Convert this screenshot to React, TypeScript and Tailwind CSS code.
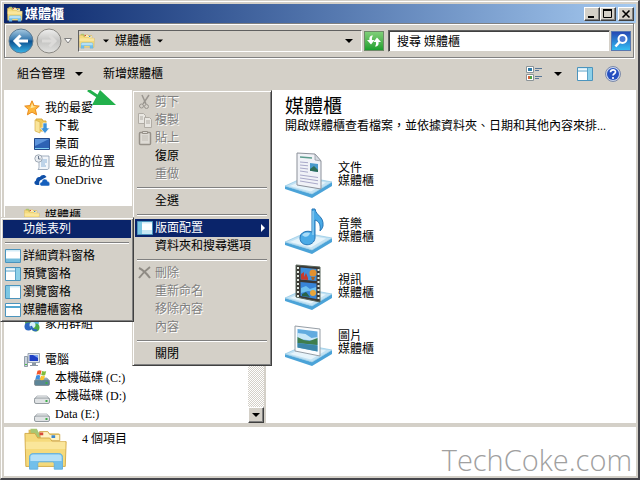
import React, { useState } from "react";
import { twMerge } from "tailwind-merge";

type IconProps = { className?: string };

const FolderIcon = ({ className = "size-4" }: IconProps) => (
  <svg viewBox="0 0 48 48" className={className} aria-hidden="true">
    <path d="M5 3h9l2 4h22v8H5z" fill="#d9bb58" />
    <path d="M7 2h7l2 4h10v5H8z" fill="#a9c774" />
    <path d="M17 5h9l2 3h11v7H18z" fill="#fff3c4" stroke="#cfa94a" />
    <path d="M1 7h11l3 5h13l3 4h15l-1 27H2z" fill="#f5da7c" stroke="#d2a945" />
    <path d="M2 16h43v8H2z" fill="#fbe9a2" opacity=".8" />
    <path d="M17 6h4v3h-4z" fill="#d84a3a" />
    <path d="M30 9h4v3h-4z" fill="#3a86d0" />
    <path d="M6 46V33c0-3 2-4 4-4h28c3 0 4 2 4 4v13h-9v-6c0-1-1-2-2-2H17c-1 0-2 1-2 2v6z" fill="#72bfea" stroke="#62afdf" />
    <path d="M7 37v-4c0-2 1-3 3-3h28c2 0 3 1 3 3v4z" fill="#b4e0f8" />
  </svg>
);

const StarIcon = () => (
  <svg viewBox="0 0 16 16" className="size-4" aria-hidden="true">
    <path d="M8 .8l2.100 4.800 5.200.5-3.900 3.500 1.200 5.200L8 12.100l-4.600 2.700 1.200-5.200L.7 6.100l5.200-.5z" fill="#fdb73c" stroke="#e98a1c" />
    <path d="M8 3l1.300 3.300 3 .4-6 1.600L7 6.400z" fill="#ffe9a3" />
  </svg>
);

const DownloadIcon = () => (
  <svg viewBox="0 0 16 16" className="size-4" aria-hidden="true">
    <path d="M2 1h6l1 2h3v10H2z" fill="#efc95a" stroke="#d8a93a" />
    <path d="M1 2l5 2v11l-5-2z" fill="#fae59a" stroke="#d8b04a" strokeWidth=".7" />
    <path d="M9 5h4v5h2.500L11 15.500 6.500 10H9z" fill="#3d93da" stroke="#fff" strokeWidth=".6" />
  </svg>
);

const DesktopIcon = () => (
  <svg viewBox="0 0 16 16" className="size-4" aria-hidden="true">
    <path d="M.5 2.500h15v11H.5z" fill="#2d62b4" stroke="#23498a" />
    <path d="M1 3h14L1 10z" fill="#5e95dc" />
    <path d="M1 12h14v1H1z" fill="#7fd0f2" />
  </svg>
);

const RecentIcon = () => (
  <svg viewBox="0 0 16 16" className="size-4" aria-hidden="true">
    <path d="M5 2h10v11c0 2-1 2.500-2 2.500H4c1-1 1-2 1-3z" fill="#f3f6fa" stroke="#8b9cb0" strokeWidth=".8" />
    <path d="M7 6h6M7 8h6M7 10h4M7 12h5" stroke="#7fa9d4" strokeWidth=".9" />
    <circle cx="4.500" cy="4.500" r="3.700" fill="#e9edf2" stroke="#97a2ae" strokeWidth=".9" />
    <path d="M4.500 2v3h2" stroke="#5b6b80" fill="none" strokeWidth=".9" />
  </svg>
);

const OneDriveIcon = () => (
  <svg viewBox="0 0 16 16" className="size-4" aria-hidden="true">
    <path d="M3 13C0 13-.5 9.500 2 8.500 2 6 4 4.500 6 5c1-2.500 5-3 6.500 0L7 8c-2 1-2 3-1.500 5z" fill="#0f4fa8" />
    <path d="M7.500 14c-2.500-.5-2-3.800.3-4 0-3.600 5-4 5.700-.7C16.500 9.500 16.500 14 14 14z" fill="#1560bd" stroke="#fff" strokeWidth=".5" />
  </svg>
);

const HomeGroupIcon = () => (
  <svg viewBox="0 0 16 16" className="size-4" aria-hidden="true">
    <circle cx="5" cy="6" r="4" fill="#56a84c" />
    <circle cx="11" cy="6" r="4" fill="#58b4e4" />
    <circle cx="4.500" cy="10.500" r="4" fill="#2d67c2" />
    <circle cx="11.500" cy="11.500" r="4" fill="#4cab48" />
    <circle cx="8.500" cy="9" r="3" fill="#d8f0fb" />
    <path d="M7 10c1 3 3 5 6 4" fill="none" stroke="#2d67c2" strokeWidth="2" />
  </svg>
);

const ComputerIcon = () => (
  <svg viewBox="0 0 16 16" className="size-4" aria-hidden="true">
    <path d="M.5 4.500h3v10h-3z" fill="#c9d3dd" stroke="#7f8c99" strokeWidth=".8" />
    <path d="M4 1.500h11.500v9H4z" fill="#dfe5ec" stroke="#8492a2" strokeWidth=".8" />
    <path d="M5.500 3h8.500v6H5.500z" fill="#1e3fc4" />
    <path d="M9 3h5v3z" fill="#7ea6f2" />
    <path d="M8 11h4v2h2v1H6v-1h2z" fill="#8d99a6" />
    <path d="M1 12h2v1H1z" fill="#4ec04a" />
  </svg>
);

const DiskIcon = ({ system = false }: { system?: boolean }) => (
  <svg viewBox="0 0 16 16" className="size-4" aria-hidden="true">
    <path d="M3 8h10l2.500 3H.5z" fill={system ? "#8fb6cc" : "#f4f5f6"} stroke="#98a0a6" strokeWidth=".7" />
    <rect x=".5" y="10" width="15" height="5.500" rx="1.500" fill={system ? "#5d8597" : "#dfe2e4"} stroke="#7c858b" strokeWidth=".8" />
    <path d="M11.500 12h2v2h-2z" fill="#3fae49" />
    {system && (
      <g>
        <path d="M3.500.8q2-1 4 0l-1 4q-2-1-4 0z" fill="#f0562c" />
        <path d="M8.200 1.100q2 1 4-.2l-1 4q-2 1-4 .2z" fill="#7fbd3b" />
        <path d="M2.300 5.500q2-1 4 0l-1 4q-2-1-4 0z" fill="#3c8fe0" />
        <path d="M7 5.800q2 1 4-.2l-1 4q-2 1-4 .2z" fill="#fbc52e" />
      </g>
    )}
  </svg>
);

type Pane = "bottom" | "right" | "left" | "top" | "both";

// Маленькая иконка окна с выделенной панелью
const PaneIcon = ({ pane }: { pane: Pane }) => (
  <svg viewBox="0 0 16 16" className="size-4 shrink-0" aria-hidden="true">
    <path d="M.5 1.500h15v13H.5z" fill="#fff" stroke="#4b94bd" />
    {pane !== "top" && <path d="M1 2h14v1.500H1z" fill="#d3ebf6" />}
    {pane === "bottom" && <path d="M1 10.500h14V14H1z" fill="#74bcdc" />}
    {pane === "top" && <path d="M1 4h14v2H1z" fill="#54a8d2" />}
    {pane === "right" && (
      <>
        <path d="M10.500 2H15v12h-4.500z" fill="#8dd0e8" />
        <path d="M1 5h9M10.500 2v12" stroke="#5ba3c8" />
      </>
    )}
    {(pane === "left" || pane === "both") && <path d="M1 2h4v12H1z" fill="#7cc6e2" />}
    {pane === "both" && <path d="M5 10h10v4H5z" fill="#c8e8f4" />}
  </svg>
);

const CutIcon = () => (
  <svg viewBox="0 0 16 16" className="size-4" fill="none" stroke="#9a9690" aria-hidden="true">
    <path d="M5 1l4 9M12 1L6 10" strokeWidth="1.500" />
    <circle cx="4.500" cy="12" r="2" />
    <circle cx="9.500" cy="12.500" r="2" />
  </svg>
);

const CopyIcon = () => (
  <svg viewBox="0 0 16 16" className="size-4" fill="#e9e7e2" stroke="#b0aca5" aria-hidden="true">
    <path d="M1.500 1.500h5l2 2v8h-7z" />
    <path d="M7.500 5.500h5l2 2v8h-7z" />
    <path d="M3 5h3M3 7h3M9 9h4M9 11h4" />
  </svg>
);

const PasteIcon = () => (
  <svg viewBox="0 0 16 16" className="size-4" fill="#dedbd5" stroke="#969189" aria-hidden="true">
    <rect x="2.500" y="2.500" width="11" height="12" rx="1" strokeWidth="1.500" />
    <path d="M5.500 1.500h5v2h-5z" />
    <path d="M5 6h6M5 8h6M5 10h6" stroke="#c2beb6" />
  </svg>
);

const DeleteIcon = () => (
  <svg viewBox="0 0 16 16" className="size-4" fill="none" aria-hidden="true">
    <path d="M2 3c4 2 8 6 11 10M13 2C9 5 5 9 2 13" stroke="#8f8b84" strokeWidth="2" />
  </svg>
);

const Caret = ({ className = "" }: IconProps) => (
  <svg viewBox="0 0 8 4" className={twMerge("h-1 w-2 shrink-0", className)} aria-hidden="true">
    <path d="M0 0h8L4 4z" fill="currentColor" />
  </svg>
);

// Голубая подставка под иконкой библиотеки
const Stand = () => (
  <g>
    <path d="M0 35l27 8 20-12v4L27 47 0 38z" fill="#4ba3d8" />
    <path d="M0 35l20-9 27 5-20 12z" fill="#c3e2f3" stroke="#8cc5e4" strokeWidth=".7" />
    <path d="M5 35l16-7 20 3.500-15 9z" fill="#e6f4fb" />
  </g>
);

const DocumentArt = () => (
  <svg viewBox="0 0 48 48" className="size-12" aria-hidden="true">
    <Stand />
    <path d="M12 2l18 1 6 7v28l-24-4z" fill="#f0f2f7" stroke="#8b9099" />
    <path d="M30 3v6l6 1z" fill="#d5dae2" stroke="#8b9099" strokeWidth=".7" />
    <path d="M15 6l12 1" stroke="#5b9c8d" strokeWidth="1.500" />
    <path d="M15 11l8 .7M15 14l8 .8M15 17l8 1M15 20l8 1.200M15 24l18 2.500M15 27l18 2.700M15 30l18 3" stroke="#a9a9c9" />
    <path d="M25 12l8 1v8l-8-1.200z" fill="#4a9acb" />
    <path d="M25 18l4-3 4 4v2l-8-1.200z" fill="#2e6d56" />
  </svg>
);

const MusicArt = () => (
  <svg viewBox="0 0 48 48" className="size-12" aria-hidden="true">
    <Stand />
    <path d="M27 2h3c1 7 9 7 8 17-1 3-2 4-3 5 1-8-2-10-5-11v18c-1 9-15 9-15 0 0-6 7-8 12-6z" fill="#4aaae6" stroke="#2474b5" />
    <path d="M17 28c2-3 6-3 8-2-1 4-5 5-8 2z" fill="#a8dcf8" />
    <path d="M28 4v24" stroke="#a8dcf8" />
  </svg>
);

const VideoArt = () => (
  <svg viewBox="0 0 48 48" className="size-12" aria-hidden="true">
    <Stand />
    <path d="M11 2l24 2v35l-24-5z" fill="#3a3733" stroke="#59665c" />
    <path d="M13 4v30M33.500 6v31" stroke="#e5eee6" strokeWidth="2" strokeDasharray="2 2" />
    <path d="M15.500 4.500l16 1.500v12l-16-1.500z" fill="#3f8fdc" />
    <path d="M15.500 19l16 1.500V36l-16-3z" fill="#3885d8" />
    <path d="M16 11l3-2v5l2-4 2 5v2l-7-.6z" fill="#c43a2d" />
    <circle cx="28" cy="10" r="3.500" fill="#e3912f" />
    <path d="M26 14h4l-1 3h-2z" fill="#a9611f" />
    <path d="M16 25l5-2 4 3 6-2v5l-8-1-7 2z" fill="#6fc1ef" />
    <circle cx="28" cy="30" r="3" fill="#e8a53a" />
    <path d="M17 31l4-2 4 5-8-1z" fill="#286348" />
  </svg>
);

const PictureArt = () => (
  <svg viewBox="0 0 48 48" className="size-12" aria-hidden="true">
    <Stand />
    <path d="M10 7l25 3v27l-25-5z" fill="#fbfcfd" stroke="#969ea6" />
    <path d="M12.500 10l20 2.500v20l-20-4z" fill="#62abdf" />
    <path d="M12.500 14l8 1 6 4 6-1v4l-20-2z" fill="#c8e7f8" />
    <path d="M12.500 18l6 3 6 1 8-3v7l-20-2z" fill="#3f7d4c" />
    <path d="M12.500 24l20 2.500v6l-20-4z" fill="#3c86a9" />
  </svg>
);

const TREE = [
  {
    label: "我的最愛",
    icon: <StarIcon />,
    items: [
      { label: "下載", icon: <DownloadIcon /> },
      { label: "桌面", icon: <DesktopIcon /> },
      { label: "最近的位置", icon: <RecentIcon /> },
      { label: "OneDrive", icon: <OneDriveIcon /> },
    ],
  },
  { label: "媒體櫃", icon: <FolderIcon />, selected: true, className: "pb-[72px]", items: [] },
  { label: "家用群組", icon: <HomeGroupIcon />, items: [] },
  {
    label: "電腦",
    icon: <ComputerIcon />,
    items: [
      { label: "本機磁碟 (C:)", icon: <DiskIcon system /> },
      { label: "本機磁碟 (D:)", icon: <DiskIcon /> },
      { label: "Data (E:)", icon: <DiskIcon /> },
    ],
  },
];

const LIBRARIES = [
  { label: "文件", art: <DocumentArt /> },
  { label: "音樂", art: <MusicArt /> },
  { label: "視訊", art: <VideoArt /> },
  { label: "圖片", art: <PictureArt /> },
];

interface MenuEntry {
  label: string;
  icon?: React.ReactNode;
  disabled?: boolean;
  active?: boolean;
  submenu?: boolean;
}

// null — разделитель
const ORGANIZE_MENU: (MenuEntry | null)[] = [
  { label: "剪下", icon: <CutIcon />, disabled: true },
  { label: "複製", icon: <CopyIcon />, disabled: true },
  { label: "貼上", icon: <PasteIcon />, disabled: true },
  { label: "復原" },
  { label: "重做", disabled: true },
  null,
  { label: "全選" },
  null,
  { label: "版面配置", icon: <PaneIcon pane="both" />, active: true, submenu: true },
  { label: "資料夾和搜尋選項" },
  null,
  { label: "刪除", icon: <DeleteIcon />, disabled: true },
  { label: "重新命名", disabled: true },
  { label: "移除內容", disabled: true },
  { label: "內容", disabled: true },
  null,
  { label: "關閉" },
];

const LAYOUT_MENU: (MenuEntry | null)[] = [
  { label: "功能表列", active: true },
  null,
  { label: "詳細資料窗格", icon: <PaneIcon pane="bottom" /> },
  { label: "預覽窗格", icon: <PaneIcon pane="right" /> },
  { label: "瀏覽窗格", icon: <PaneIcon pane="left" /> },
  { label: "媒體櫃窗格", icon: <PaneIcon pane="top" /> },
];

const Menu = ({ entries, className }: { entries: (MenuEntry | null)[]; className: string }) => (
  <div
    role="menu"
    className={twMerge(
      "absolute border border-t-[#d4d0c8] border-r-[#404040] border-b-[#404040] border-l-[#d4d0c8] bg-[#d4d0c8] p-0.5 shadow-[inset_1px_1px_0_#fff,inset_-1px_-1px_0_#808080]",
      className,
    )}
  >
    {entries.map((entry, i) =>
      entry ? (
        <button
          key={entry.label}
          type="button"
          role="menuitem"
          disabled={entry.disabled}
          className={twMerge(
            "flex h-[18px] w-full items-center gap-0.5 pl-0.5 text-left",
            entry.disabled && "text-[#808080] [text-shadow:1px_1px_0_#fff]",
            entry.active && "bg-[#0a246a] text-white",
          )}
        >
          <span className="size-4 shrink-0">{entry.icon}</span>
          <span className="grow whitespace-nowrap">{entry.label}</span>
          {entry.submenu && (
            <svg viewBox="0 0 4 8" className="mr-1 h-2 w-1" aria-hidden="true">
              <path d="M0 0l4 4-4 4z" fill="#fff" />
            </svg>
          )}
        </button>
      ) : (
        <div key={i} role="separator" className="mx-0.5 flex h-[9px] flex-col justify-center">
          <div className="border-t border-b border-t-[#808080] border-b-white" />
        </div>
      ),
    )}
  </div>
);

const WindowButton = ({ label, children }: { label: string; children: React.ReactNode }) => (
  <button
    type="button"
    aria-label={label}
    className="h-3.5 w-4 border border-t-white border-r-[#404040] border-b-[#404040] border-l-white bg-[#d4d0c8] shadow-[inset_-1px_-1px_0_#808080]"
  >
    <svg viewBox="0 0 14 12" className="h-3 w-3.5" fill="none" stroke="#000" aria-hidden="true">
      {children}
    </svg>
  </button>
);

const App = () => {
  const [query, setQuery] = useState("搜尋 媒體櫃");

  return (
    <div className="flex min-h-screen flex-col border-t border-r-2 border-b-2 border-l border-t-[#d4d0c8] border-r-[#45454b] border-b-[#45454b] border-l-[#d4d0c8] bg-[#d4d0c8] p-[3px] pr-0.5 pb-0.5 font-['Liberation_Serif','Noto_Sans_CJK_TC',serif] text-xs/[18px] text-black shadow-[inset_1px_1px_0_#fff]">
      {/* Title bar */}
      <header className="flex h-[19px] items-center bg-linear-to-r from-[#0a246a] to-[#a6caf0] pr-0.5 pl-[3px]">
        <FolderIcon />
        <h1 className="ml-0.5 grow text-[13px]/[18px] font-bold text-white">媒體櫃</h1>
        <WindowButton label="最小化">
          <path d="M3 9h6" strokeWidth="2" />
        </WindowButton>
        <WindowButton label="最大化">
          <path d="M2.500 2v7.500h8V2" />
          <path d="M2 2h9" strokeWidth="2" />
        </WindowButton>
        <span className="w-0.5" />
        <WindowButton label="關閉">
          <path d="M3.500 2.500l7 7M10.500 2.500l-7 7" strokeWidth="1.600" />
        </WindowButton>
      </header>

      {/* Address bar */}
      <div className="mr-0.5 flex h-[35px] items-center border border-[#808080] pr-0.5 pl-[3px] shadow-[inset_1px_1px_0_#fff,1px_1px_0_#fff]">
        <button type="button" aria-label="上一頁">
          <svg viewBox="0 0 26 26" className="size-[26px]" aria-hidden="true">
            <defs>
              <linearGradient id="back" x2="0" y2="1">
                <stop offset="0" stopColor="#a9cbe2" />
                <stop offset=".45" stopColor="#3577ad" />
                <stop offset=".5" stopColor="#0c4f8e" />
                <stop offset="1" stopColor="#3ab5e8" />
              </linearGradient>
            </defs>
            <circle cx="13" cy="13" r="12" fill="url(#back)" stroke="#5d7b93" />
            <path d="M20 13H8M12.500 7.500L7 13l5.500 5.500" fill="none" stroke="#fff" strokeWidth="3" />
          </svg>
        </button>
        <button type="button" aria-label="下一頁" className="ml-0.5">
          <svg viewBox="0 0 26 26" className="size-[26px]" aria-hidden="true">
            <defs>
              <linearGradient id="forward" x2="0" y2="1">
                <stop offset="0" stopColor="#efefee" />
                <stop offset=".5" stopColor="#c4c4c2" />
                <stop offset="1" stopColor="#e2e2e0" />
              </linearGradient>
            </defs>
            <circle cx="13" cy="13" r="12" fill="url(#forward)" stroke="#8a8883" />
            <path d="M6 13h12M13.500 7.500L19 13l-5.500 5.500" fill="none" stroke="#dcdbd9" strokeWidth="3" />
          </svg>
        </button>
        <button type="button" aria-label="最近的網頁" className="ml-0.5">
          <svg viewBox="0 0 8 6" className="h-1.5 w-2" aria-hidden="true">
            <path d="M.5 .5h7L4 5z" fill="#fff" stroke="#808080" />
          </svg>
        </button>
        <div className="ml-1.5 flex h-[22px] grow items-center border border-t-[#606060] border-r-white border-b-white border-l-[#606060]">
          <FolderIcon />
          <Caret className="ml-2 w-1.5" />
          <button type="button" className="ml-1.5 flex items-center">
            媒體櫃
            <Caret className="ml-1.5 w-1.5" />
          </button>
          <button type="button" aria-label="先前的位置" className="mr-2 ml-auto">
            <Caret />
          </button>
        </div>
        <button
          type="button"
          aria-label="重新整理"
          className="ml-0.5 flex size-5 items-center justify-center border border-[#6d8a68] bg-linear-to-b from-[#7fcf78] to-[#16a02c]"
        >
          <svg viewBox="0 0 18 18" className="size-[18px]" aria-hidden="true">
            <path d="M8 3.500C5 3.500 4 5.500 4.500 8H2l4 4.500L9.500 8H7c-.3-2 .2-3 1-4.500z" fill="#fff" />
            <path d="M10 14.500c3 0 4-2 3.500-4.500H16l-4-4.500L8.500 10H11c.3 2-.2 3-1 4.500z" fill="#fff" />
          </svg>
        </button>
        <input
          type="text"
          aria-label="搜尋"
          value={query}
          onChange={(e) => setQuery(e.target.value)}
          className="ml-1 h-[22px] w-[222px] border border-t-[#606060] border-r-[#d4d0c8] border-b-[#d4d0c8] border-l-[#606060] bg-white pl-2 shadow-[inset_1px_1px_0_#404040] outline-none"
        />
        <button
          type="button"
          aria-label="開始搜尋"
          className="ml-px flex size-5 items-center justify-center border border-[#5878b0] bg-linear-to-b from-[#2748b4] to-[#35bdf2]"
        >
          <svg viewBox="0 0 18 18" className="size-[18px]" fill="none" aria-hidden="true">
            <circle cx="10.500" cy="7" r="4" fill="#4b78d2" stroke="#fff" strokeWidth="2" />
            <path d="M7.500 10L3.500 14.500" stroke="#fff" strokeWidth="2.600" />
          </svg>
        </button>
      </div>

      {/* Toolbar */}
      <div className="flex h-8 items-center pr-[15px] pl-[13px]">
        <button type="button" className="flex items-center">
          組合管理
          <Caret className="ml-2.5" />
        </button>
        <button type="button" className="ml-5">
          新增媒體櫃
        </button>
        <button type="button" aria-label="變更檢視" className="ml-auto flex items-center">
          <svg viewBox="0 0 16 16" className="size-4" aria-hidden="true">
            <path d="M.5.5h7v6h-7zM.5 8.500h7v6h-7z" fill="#fff" stroke="#8b9498" />
            <path d="M2 2h4v3H2z" fill="#2f7ca8" />
            <path d="M2 10h2v3H2z" fill="#d26237" />
            <path d="M4 10h2v3H4z" fill="#4ea344" />
            <path d="M9 2.500h7M9 4.500h4M9 10.500h7M9 12.500h4" stroke="#5a7898" />
          </svg>
          <Caret className="ml-3" />
        </button>
        <button type="button" aria-label="顯示預覽窗格" className="ml-[15px]">
          <PaneIcon pane="right" />
        </button>
        <button type="button" aria-label="取得說明" className="ml-3">
          <svg viewBox="0 0 16 16" className="size-4" aria-hidden="true">
            <circle cx="8" cy="8" r="7.500" fill="#c9d5ee" stroke="#7d8aa8" />
            <circle cx="8" cy="8" r="6" fill="#2650c0" />
            <path d="M5.500 6.300C5.500 3 10.700 3 10.500 6c-.1 1.700-2.500 1.800-2.500 3.500" fill="none" stroke="#fff" strokeWidth="1.700" />
            <circle cx="8" cy="12" r="1.100" fill="#fff" />
          </svg>
        </button>
      </div>

      <main className="relative flex grow">
        {/* Navigation pane */}
        <nav className="flex w-[262px] shrink-0 border-r-2 border-[#d4d0c8] bg-white">
          <div className="flex grow flex-col gap-[17px] pt-2">
            {TREE.map((group) => (
              <div key={group.label} className={group.className}>
                <a
                  href="#"
                  className={twMerge(
                    "ml-px flex h-[19px] items-center gap-[5px] pl-[19px]",
                    group.selected && "bg-[#d4d0c8]",
                  )}
                >
                  {group.icon}
                  {group.label}
                </a>
                {group.items.map((item) => (
                  <a key={item.label} href="#" className="flex h-[18px] items-center gap-[5px] pl-[30px]">
                    {item.icon}
                    {item.label}
                  </a>
                ))}
              </div>
            ))}
          </div>
          <div className="flex w-4 flex-col justify-end bg-[conic-gradient(#d4d0c8_25%,#fff_0_50%,#d4d0c8_0_75%,#fff_0)] bg-size-[2px_2px]">
            <button
              type="button"
              aria-label="向下捲動"
              className="flex size-4 items-center justify-center border border-t-white border-r-[#404040] border-b-[#404040] border-l-white bg-[#d4d0c8] shadow-[inset_-1px_-1px_0_#808080]"
            >
              <Caret />
            </button>
          </div>
        </nav>

        {/* Library list */}
        <section className="min-w-0 grow bg-white pt-[5px] pl-[19px]">
          <h2 className="text-[19px]/6">媒體櫃</h2>
          <p className="truncate leading-[14px]">
            開啟媒體櫃查看檔案，並依據資料夾、日期和其他內容來排...
          </p>
          <ul className="mt-3.5">
            {LIBRARIES.map((library) => (
              <li key={library.label} className="flex h-14 items-center gap-[5px]">
                {library.art}
                <div className="leading-[13px]">
                  <p>{library.label}</p>
                  <p>媒體櫃</p>
                </div>
              </li>
            ))}
          </ul>
        </section>

        <svg viewBox="0 0 30 18" className="absolute top-0 left-[83px] h-[18px] w-[30px]" aria-hidden="true">
          <path d="M1 0l12 8" stroke="#22b14c" strokeWidth="3" />
          <path d="M13 0l16 15H5z" fill="#22b14c" />
        </svg>
        <Menu entries={ORGANIZE_MENU} className="top-0 left-32 w-[140px]" />
        <Menu entries={LAYOUT_MENU} className="top-[127px] -left-1 w-[134px]" />
      </main>

      {/* Details pane */}
      <footer className="mt-1 flex h-[49px] bg-white pl-5">
        <FolderIcon className="size-11" />
        <p className="ml-3.5 pt-[3px]">4 個項目</p>
        <p className="mr-1 ml-auto self-end font-['Open_Sans',sans-serif] text-[29px]/8 font-light text-[#a0a0a0]">
          TechCoke.com
        </p>
      </footer>
    </div>
  );
};

export default App;
